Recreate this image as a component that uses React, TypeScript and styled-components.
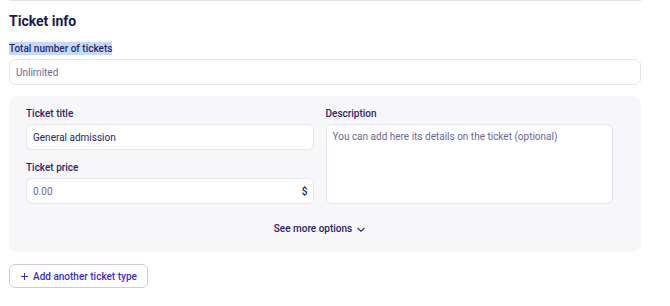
import React from "react";
import styled, { createGlobalStyle } from "styled-components";

const Global = createGlobalStyle`
  html, body { margin: 0; padding: 0; background: #ffffff; }
  body { font-family: Roboto, "Noto Sans", sans-serif; }
  * { box-sizing: border-box; }
`;

const Page = styled.div`
  width: 632px;
  margin-left: 9px;
  border-top: 1px solid #e4e4ea;
  padding-top: 10px;
  display: flex;
  flex-direction: column;
`;

const Heading = styled.h2`
  margin: 0;
  font-size: 14px;
  line-height: 20px;
  font-weight: 700;
  color: #1c1a4d;
`;

const Label = styled.label<{ $selected?: boolean }>`
  display: block;
  font-size: 10px;
  line-height: 14px;
  font-weight: 500;
  color: #2b2868;
  span {
    background: ${(p) => (p.$selected ? "#c4daf8" : "transparent")};
    padding: 1px 0;
  }
`;

const Field = styled.div<{ $top?: number }>`
  display: flex;
  flex-direction: column;
  gap: 3px;
  margin-top: ${(p) => p.$top ?? 0}px;
`;

const InputBox = styled.div`
  height: 26px;
  background: #ffffff;
  border: 1px solid #e6e6ee;
  border-radius: 6px;
  display: flex;
  align-items: center;
  justify-content: space-between;
  padding: 0 5px 0 6px;
  font-size: 10px;
`;

const Value = styled.span<{ $placeholder?: boolean }>`
  color: ${(p) => (p.$placeholder ? "#6c6894" : "#27245e")};
`;

const Suffix = styled.span`
  color: #27245e;
  font-weight: 500;
`;

const Panel = styled.div`
  margin-top: 11px;
  background: #f7f7fa;
  border-radius: 8px;
  padding: 11px 28px 16px 17px;
  display: flex;
  flex-direction: column;
`;

const Columns = styled.div`
  display: grid;
  grid-template-columns: 1fr 1fr;
  column-gap: 12px;
`;

const Column = styled.div`
  display: flex;
  flex-direction: column;
`;

const TextArea = styled.div`
  flex: 1;
  margin-top: 3px;
  background: #ffffff;
  border: 1px solid #e6e6ee;
  border-radius: 6px;
  padding: 5px 6px;
  font-size: 10px;
  line-height: 13px;
  color: #6c6894;
`;

const MoreRow = styled.div`
  margin-top: 18px;
  display: flex;
  justify-content: center;
  align-items: center;
  gap: 5px;
  font-size: 10px;
  line-height: 14px;
  font-weight: 500;
  color: #27245e;
`;

const AddButton = styled.button`
  margin-top: 12px;
  align-self: flex-start;
  height: 24px;
  display: flex;
  align-items: center;
  gap: 5px;
  padding: 0 10px 0 11px;
  white-space: nowrap;
  background: #ffffff;
  border: 1px solid #cdc9f6;
  border-radius: 6px;
  font-family: Roboto, "Noto Sans", sans-serif;
  font-size: 10px;
  font-weight: 500;
  color: #3a2fc4;
`;

export default function App() {
  return (
    <>
      <Global />
      <Page>
        <Heading>Ticket info</Heading>
        <Field $top={11}>
          <Label $selected>
            <span>Total number of tickets</span>
          </Label>
          <InputBox>
            <Value $placeholder>Unlimited</Value>
          </InputBox>
        </Field>
        <Panel>
          <Columns>
            <Column>
              <Field>
                <Label>Ticket title</Label>
                <InputBox>
                  <Value>General admission</Value>
                </InputBox>
              </Field>
              <Field $top={11}>
                <Label>Ticket price</Label>
                <InputBox>
                  <Value $placeholder>0.00</Value>
                  <Suffix>$</Suffix>
                </InputBox>
              </Field>
            </Column>
            <Column>
              <Label>Description</Label>
              <TextArea>You can add here its details on the ticket (optional)</TextArea>
            </Column>
          </Columns>
          <MoreRow>
            See more options
            <svg width="8" height="5" viewBox="0 0 8 5" fill="none">
              <path d="M0.5 0.8 L4 4.2 L7.5 0.8" stroke="#27245e" strokeWidth="1.1" />
            </svg>
          </MoreRow>
        </Panel>
        <AddButton>
          <svg width="7" height="7" viewBox="0 0 8 8" fill="none">
            <path d="M4 0 V8 M0 4 H8" stroke="#3a2fc4" strokeWidth="1.2" />
          </svg>
          Add another ticket type
        </AddButton>
      </Page>
    </>
  );
}
